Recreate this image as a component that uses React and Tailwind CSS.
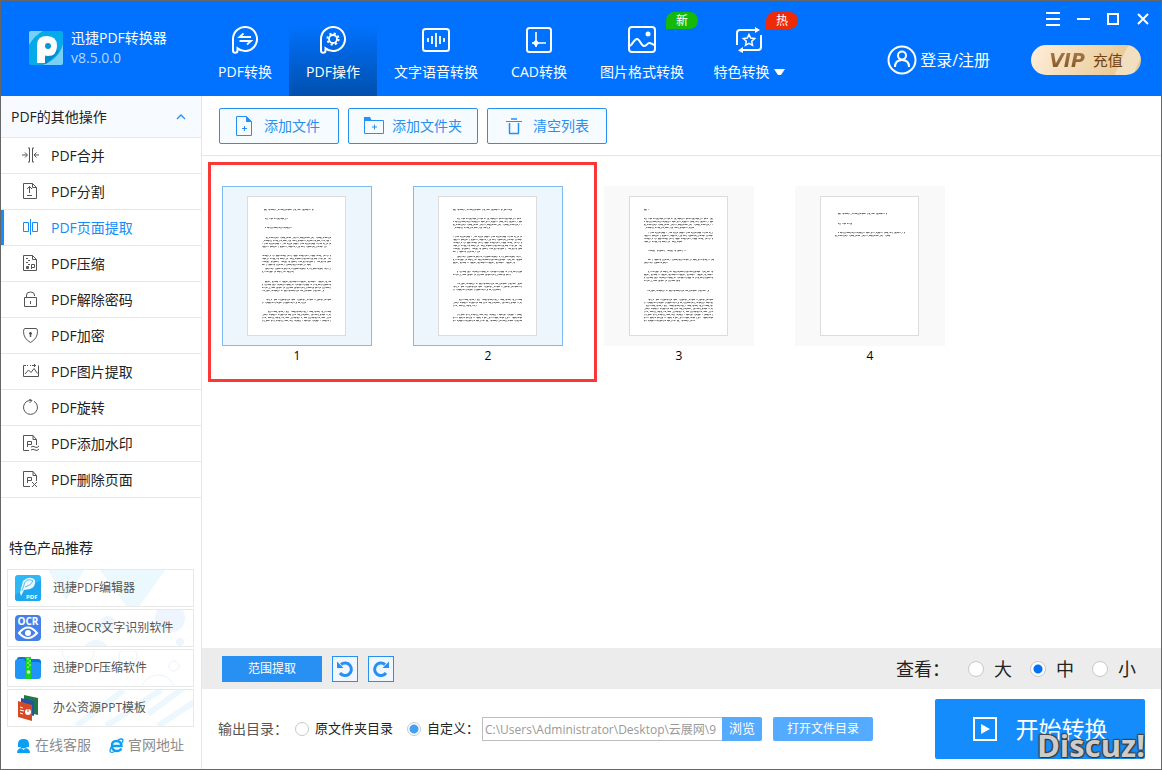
import React, { useState } from 'react';

const Svg = ({ size = 28, box = 28, className = '', children }) => (
  <svg
    width={size}
    height={size}
    viewBox={`0 0 ${box} ${box}`}
    fill="none"
    stroke="currentColor"
    strokeWidth="2"
    aria-hidden="true"
    className={`shrink-0 ${className}`}
  >
    {children}
  </svg>
);

const bubble = 'M2 24.500V13A12 12 0 1 1 6.500 22.400V24.500a2.250 2.250 0 0 1-4.500 0z';

const tabs = [
  {
    name: 'PDF转换',
    width: 'w-[88px]',
    icon: (
      <>
        <path d={bubble} />
        <path d="M20 11H8.500l4-3.500M8.500 15H20l-4 3.500" strokeWidth="1.800" />
      </>
    ),
  },
  {
    name: 'PDF操作',
    width: 'w-[88px]',
    icon: (
      <>
        <path d={bubble} />
        <circle cx="14" cy="13" r="4" strokeWidth="1.800" />
        <circle cx="14" cy="13" r="5.600" strokeWidth="2" strokeDasharray="2.200 2.198" />
      </>
    ),
  },
  {
    name: '文字语音转换',
    width: 'w-[118px]',
    icon: (
      <>
        <rect x="1" y="3" width="26" height="22" rx="2.500" />
        <path d="M6 12v4M10 10v8M14 7v14M18 10v8M22 12v4" strokeWidth="1.800" />
      </>
    ),
  },
  {
    name: 'CAD转换',
    width: 'w-[88px]',
    icon: (
      <>
        <rect x="2" y="2" width="24" height="24" rx="2.500" />
        <path d="M11 6v15M7 17h14" strokeWidth="1.600" />
        <path d="M11 13.500l3 3.500-3 3.500L7.500 17z" fill="currentColor" stroke="none" />
      </>
    ),
  },
  {
    name: '图片格式转换',
    width: 'w-[118px]',
    badge: '新',
    badgeClass: 'left-[38px] bg-[#14b90a]',
    icon: (
      <>
        <rect x="1" y="1" width="26" height="25" rx="3" />
        <path d="M2 20c3-2 4-7 7-7s4 7 7 7 3-3 5-3 3 1 5 2" />
        <circle cx="20" cy="8" r="2.500" fill="currentColor" stroke="none" />
      </>
    ),
  },
  {
    name: '特色转换',
    width: 'w-24',
    arrow: true,
    badge: '热',
    badgeClass: 'left-[31px] bg-[#ef2b07]',
    icon: (
      <>
        <path d="M2 19V7q0-3 3-3h16M26 9v12q0 3-3 3H7" />
        <path d="M20 1l5 3-5 3zM8 21l-5 3.500L8 27z" fill="currentColor" stroke="none" />
        <path d="M14 8.500l1.700 3.600 4 .5-3 2.700.8 4-3.500-2-3.500 2 .8-4-3-2.700 4-.5z" strokeWidth="1.500" />
      </>
    ),
  },
];

const operations = [
  { name: 'PDF合并', icon: <path d="M6 1h1.500v14H6M12 1h-1.500v14H12M0 8h5M3 5.500L5.500 8 3 10.500M17 8h-5M14.500 5.500L12 8l2.500 2.500" /> },
  { name: 'PDF分割', icon: <path d="M1.500.5h9l4 4v11h-13zM10.500.5v4h4M7.500 10V3.500M5 6l2.500-2.500L10 6M5 12.500h5" /> },
  { name: 'PDF页面提取', icon: <path d="M1.500 3.500h5v9h-5zM10.500 3.500h5v9h-5zM8.500 0v16" /> },
  {
    name: 'PDF压缩',
    icon: <path d="M1.500.5h9l4 4v11h-13zM10.500.5v4h4M4 3.500h2M6 5.500h2M4 7.500h2M6 9.500h2M4 12.500h3M4.500 11.500h2v2h-2zM9.500 14V9.500h3v3h-3" />,
  },
  { name: 'PDF解除密码', icon: <path d="M2.500 6.500h12v9h-12zM4.500 6.500V4q0-3 4-3t4 3v1M8.500 10v3" /> },
  { name: 'PDF加密', icon: <><path d="M3 1.500h11q1.500 0 1.500 3 0 7-7 11-7-4-7-11 0-3 1.500-3z" /><path d="M8.500 5v5M7 6.500h3" strokeWidth="1.500" /></> },
  { name: 'PDF图片提取', icon: <path d="M4 2.500H1.500v11h15v-11M5 2.500h1M8 2.500h1M10 2.500h4M12.500 1v3M3 11l3.500-4L9 9.500l3-4 3.500 5" /> },
  { name: 'PDF旋转', icon: <path d="M5 2.300A7 7 0 1 0 12 2.300M5 2.300q2-1 4.500-.8M7 0l3 1.500L7.500 4" /> },
  { name: 'PDF添加水印', icon: <path d="M7 15.500H1.500V.5H11l3.500 4V10M11 .5v4h3.500M5.500 12V6.500h4V9.500h-4M9 12q2-1.500 4 0t4-1M9 15q2-1.500 4 0t4-1" /> },
  { name: 'PDF删除页面', icon: <path d="M8 15.500H1.500V.5H11l3.500 4V10M11 .5v4h3.500M5.500 12V6.500h4V9.500h-4M10 11l5 5M15 11l-5 5" /> },
];

const products = [
  {
    name: '迅捷PDF编辑器',
    art: <path d="M40 0h36L58 30zM92 0h65l-32 45z" fill="#ebf8fe" />,
    icon: (
      <>
        <rect width="26" height="26" rx="3" fill="#2cb9f5" />
        <path d="M0 20L26 5v18q0 3-3 3H3q-3 0-3-3z" fill="#20a5f0" />
        <path d="M5 18L8 6q7-6 12-1 1 7-5 9l-6 1-3 6z" fill="#e8f9ff" />
        <path d="M7 16L10 7q4-4 8-1-1 4-8 6" stroke="#62bfe8" fill="none" />
        <text x="11" y="24" fontSize="6" fontWeight="bold" fill="white" fontFamily="Open Sans">PDF</text>
      </>
    ),
  },
  {
    name: '迅捷OCR文字识别软件',
    art: <g fill="#eef5fe"><circle cx="162" cy="8" r="15" /><circle cx="100" cy="14" r="8" /><circle cx="88" cy="44" r="14" /><circle cx="172" cy="32" r="4" /></g>,
    icon: (
      <>
        <rect width="26" height="26" rx="4" fill="#4480ea" />
        <text x="13" y="10" textAnchor="middle" fontSize="10" fontWeight="bold" fill="white" fontFamily="Open Sans">OCR</text>
        <path d="M4 18q9-11 18 0-9 10-18 0z" stroke="white" strokeWidth="2" fill="none" />
        <circle cx="13" cy="18" r="3" fill="white" />
      </>
    ),
  },
  {
    name: '迅捷PDF压缩软件',
    art: <g stroke="#e9f4fd" fill="none"><circle cx="70" cy="0" r="16" /><circle cx="120" cy="6" r="9" /><circle cx="166" cy="16" r="5" /><circle cx="150" cy="42" r="17" /></g>,
    icon: (
      <>
        <path d="M2 4q0-2 3-2h5l3 2h10q3 0 3 3v4H2z" fill="#0973d8" />
        <path d="M0 7q0-3 3-3h6l2 3h12q3 0 3 3v11q0 3-3 3H3q-3 0-3-3z" fill="#1e95f7" />
        <path d="M11 2h5v22h-5z" fill="#18d51e" />
        <path d="M12 4h2M14 6h2M12 8h2M14 10h2M12 12h2" stroke="#b9ffb0" />
        <circle cx="13.500" cy="17" r="1.800" fill="#e0ffe0" />
      </>
    ),
  },
  {
    name: '办公资源PPT模板',
    art: <g stroke="#ecf8fe" strokeWidth="6"><path d="M68 36L116 0M98 36l55-36M140 24l46-34M150 36l36-24" /></g>,
    icon: (
      <>
        <path d="M9 0l14 3v17l-4-1V7L9 5z" fill="#20774a" />
        <path d="M6 3l13 3v15l-4-1V10L6 8z" fill="#2853a5" />
        <path d="M3 6l14 4v16L3 22z" fill="#d64a26" />
        <path d="M5 12l3 1M5 15l4 1M5 18l3 1" stroke="white" />
        <circle cx="13" cy="17" r="3" fill="white" />
        <path d="M13 17v-3" stroke="#d64a26" />
      </>
    ),
  },
];

// text rows of each page: [y, from, to]
const pages = [
  [[13, 17, 67], [22, 18, 41], [31, 18, 45], [41, 19, 84], [44, 15, 84], [47, 15, 84], [50, 15, 80], [59, 15, 84], [62, 15, 84], [65, 15, 84], [68, 15, 64], [72, 18, 84], [75, 15, 47], [85, 18, 84], [88, 15, 84], [91, 15, 84], [94, 15, 77], [103, 19, 84], [106, 15, 59], [115, 19, 84], [118, 15, 84], [121, 15, 84], [124, 15, 84]],
  [[13, 15, 74], [22, 19, 84], [25, 15, 84], [28, 15, 84], [31, 15, 52], [40, 15, 84], [43, 15, 84], [46, 15, 84], [49, 15, 84], [52, 15, 84], [55, 15, 42], [60, 19, 84], [63, 15, 84], [66, 15, 77], [75, 19, 84], [78, 15, 73], [87, 19, 84], [90, 15, 84], [93, 15, 63], [103, 19, 84], [106, 15, 84], [109, 15, 39], [118, 19, 84], [121, 15, 84], [124, 15, 84]],
  [[13, 15, 20], [22, 15, 84], [25, 15, 84], [28, 15, 84], [31, 15, 65], [36, 19, 84], [39, 15, 84], [42, 15, 84], [45, 15, 53], [54, 19, 57], [63, 19, 85], [66, 15, 39], [75, 19, 84], [78, 15, 84], [81, 15, 84], [84, 15, 51], [94, 18, 80], [103, 19, 84], [106, 15, 84], [109, 15, 84], [112, 15, 84], [115, 15, 84], [118, 15, 84], [121, 15, 84], [124, 15, 66]],
  [[17, 18, 67], [27, 18, 32], [36, 18, 85], [39, 15, 70]],
];

const dashes = ['3 1 5 1 2 2 4 1', '6 1 2 1 1 2 3 1 4 2', '2 1 4 1 7 1 1 1', '5 1 1 1 3 2 6 1 2 1'];
const darkDashes = ['2 3 1 1 3 4 1 2', '1 2 3 5 2 1 1 3', '3 2 1 4 1 1 2 5', '1 1 2 3 1 5 3 2'];

const PagePreview = ({ rows }) => (
  <svg width="99" height="140" viewBox="0 0 99 140" fill="none" aria-hidden="true">
    <rect x="0.500" y="0.500" width="98" height="139" fill="white" stroke="#dcdcdc" />
    {rows.map(([y, from, to], i) => (
      <g key={y}>
        <path d={`M${from} ${y + 0.5}H${to}`} stroke="#b8b8b8" strokeDasharray={dashes[i % 4]} strokeDashoffset={i * 3} />
        <path d={`M${from} ${y + 0.5}H${to}`} stroke="#777" strokeDasharray={darkDashes[i % 4]} strokeDashoffset={i * 5} />
        <path d={`M${from} ${y + 1.5}H${to}`} stroke="#d0d0d0" strokeDasharray={darkDashes[(i + 2) % 4]} strokeDashoffset={i} />
      </g>
    ))}
  </svg>
);

const Header = ({ active, onSelect }) => (
  <header className="flex h-[95px] shrink-0 bg-[#0072ff] text-white">
    <div className="flex w-[200px] shrink-0 gap-2 pl-7 pt-[27px]">
      <svg width="34" height="34" viewBox="0 0 34 34" className="mt-[3px] shrink-0" aria-hidden="true">
        <rect width="34" height="34" rx="2" fill="#06a9e9" />
        <path d="M0 14V2q0-2 2-2h12Q6 4 0 14zM14 34h18q2 0 2-2V13q-4 15-20 21z" fill="#79d0f5" />
        <path d="M11 31L27 17q4 2 1 6L17 33z" fill="#008ccc" />
        <path d="M8 32V14q0-9 10-9t10 10-9 10l-3-.5V32z" fill="white" />
        <circle cx="19" cy="15" r="3" fill="#0798d4" />
      </svg>
      <div className="text-sm">
        <h1>迅捷PDF转换器</h1>
        <p className="text-[#b6d7ff]">v8.5.0.0</p>
      </div>
    </div>
    <nav className="flex">
      {tabs.map((tab) => (
        <button
          key={tab.name}
          type="button"
          onClick={() => onSelect(tab.name)}
          className={`flex flex-col items-center gap-2 pt-[25px] text-sm whitespace-nowrap ${tab.width} ${
            active === tab.name ? 'bg-linear-to-b from-[#0072ff] from-25% to-[#0050ae]' : ''
          }`}
        >
          <span className="relative">
            <Svg>{tab.icon}</Svg>
            {tab.badge && (
              <span className={`absolute -top-[14px] h-[17px] w-8 rounded-t-full rounded-br-full text-center text-xs leading-[17px] ${tab.badgeClass}`}>
                {tab.badge}
              </span>
            )}
          </span>
          <span className="flex items-center gap-1">
            {tab.name}
            {tab.arrow && (
              <svg width="11" height="7" viewBox="0 0 11 7" fill="currentColor" aria-hidden="true">
                <path d="M0 0h11L7 6H4z" />
              </svg>
            )}
          </span>
        </button>
      ))}
    </nav>
    <div className="ml-auto flex flex-col gap-4 pt-2">
      <div className="flex h-5 justify-end pr-[3px]">
        {[
          ['菜单', 'M2 3h14M2 9h14M2 15h14'],
          ['最小化', 'M3 9h13'],
          ['最大化', 'M4 4h10v10H4z'],
          ['关闭', 'M4 4l10 10M14 4L4 14'],
        ].map(([name, d]) => (
          <button key={name} type="button" aria-label={name} className="flex w-[30px] items-center justify-center">
            <Svg size={18} box={18}><path d={d} /></Svg>
          </button>
        ))}
      </div>
      <div className="flex h-[30px] items-center gap-[41px] pr-5">
        <button type="button" className="flex items-center gap-[3px] text-base whitespace-nowrap">
          <Svg size={30} box={30}>
            <circle cx="15" cy="15" r="13.500" />
            <circle cx="15" cy="10.500" r="4" />
            <path d="M8 22q0-7 7-7t7 7" />
          </Svg>
          登录/注册
        </button>
        <button
          type="button"
          className="flex h-[30px] w-[110px] items-center justify-center gap-1 rounded-full bg-[linear-gradient(115deg,#ffeed9_0%,#eacb99_78%,#f2dfc0_79%,#f2dfc0_93%,#e8c993_94%)] text-[15px] text-[#704214]"
        >
          <span className="bg-linear-to-b from-[#b58352] to-[#74511d] bg-clip-text pr-1 font-['DejaVu_Sans'] text-[19px] font-bold text-transparent italic">VIP</span>
          充值
        </button>
      </div>
    </div>
  </header>
);

const Sidebar = ({ current, onSelect }) => (
  <aside className="flex w-[201px] shrink-0 flex-col border-r border-[#e6e6e6]">
    <button type="button" className="flex h-[42px] items-center justify-between border-b border-[#e8e8e8] bg-[#f7faff] pr-[15px] pl-[10px] text-sm">
      PDF的其他操作
      <Svg size={10} box={10} className="text-[#2890f2]">
        <path d="M1 7l4-4 4 4" strokeWidth="1.300" />
      </Svg>
    </button>
    <ul>
      {operations.map((item) => (
        <li key={item.name} className="border-b border-[#e8e8e8]">
          <button
            type="button"
            onClick={() => onSelect(item.name)}
            className={`flex h-[35px] w-full items-center gap-3 border-l-3 pl-[18px] text-sm ${
              current === item.name ? 'border-[#148cfb] text-[#148cfb]' : 'border-transparent'
            }`}
          >
            <Svg size={17} box={17} className={current === item.name ? '' : 'text-[#555]'}>
              <g strokeWidth="1">{item.icon}</g>
            </Svg>
            {item.name}
          </button>
        </li>
      ))}
    </ul>
    <h2 className="mt-10 px-2 text-sm">特色产品推荐</h2>
    <ul className="mt-[11px] flex flex-col gap-[2px] pr-[7px] pl-[6px]">
      {products.map((product) => (
        <li key={product.name}>
          <a href="#" className="relative flex h-[38px] items-center gap-3 border border-[#e8e8e8] pl-[7px] text-xs text-[#555]">
            <svg className="absolute inset-0" width="100%" height="100%" viewBox="0 0 185 36" aria-hidden="true">{product.art}</svg>
            <svg className="relative" width="26" height="26" viewBox="0 0 26 26" aria-hidden="true">{product.icon}</svg>
            <span className="relative">{product.name}</span>
          </a>
        </li>
      ))}
    </ul>
    <div className="mt-2 flex gap-[18px] px-[15px] text-sm text-[#8c8c8c]">
      <a href="#" className="flex items-center gap-1">
        <svg width="15" height="15" viewBox="0 0 15 15" fill="#0a9ff5" aria-hidden="true">
          <path d="M2 6q0-5 5.500-5T13 6v3h-2V5H4v4H2z" />
          <circle cx="7.500" cy="6.500" r="4" />
          <path d="M1 15q0-4 4-5l2.500 2 2.500-2q4 1 4 5z" />
        </svg>
        在线客服
      </a>
      <a href="#" className="flex items-center gap-1">
        <svg width="15" height="15" viewBox="0 0 15 15" fill="none" stroke="#0a9ff5" aria-hidden="true">
          <path d="M4 8h8.500q0-5-5-5T3 8q0 5 5 5 3 0 4.300-2.500" strokeWidth="2.400" />
          <path d="M9 2q4-2 5 0 0 1-1 3M3 8q-3 4-1.500 6 2 1 5-1" strokeWidth="1.300" />
        </svg>
        官网地址
      </a>
    </div>
  </aside>
);

const Toolbar = () => (
  <div className="flex h-[60px] items-center gap-[9px] border-b border-[#e6e6e6] px-[17px] text-sm text-[#2890f2]">
    <button type="button" className="flex h-9 w-[120px] items-center justify-center gap-[10px] rounded-xs border border-[#2890f2] bg-[#f6fbff] pr-1">
      <Svg size={20} box={20}>
        <path d="M2.500.5h10l5 5v14h-15zM10.500 10v5M8 12.500h5" strokeWidth="1" />
        <path d="M12 0v6h6z" fill="currentColor" stroke="none" />
      </Svg>
      添加文件
    </button>
    <button type="button" className="flex h-9 w-[130px] items-center justify-center gap-2 rounded-xs border border-[#2890f2] bg-[#f6fbff]">
      <Svg size={20} box={20}>
        <path d="M.5 17V4.500h19V17.500H.5zM10.500 8.500v5M8 11h5" strokeWidth="1" />
        <path d="M0 1h6l2 4H0z" fill="currentColor" stroke="none" />
      </Svg>
      添加文件夹
    </button>
    <button type="button" className="flex h-9 w-[120px] items-center justify-center gap-[10px] rounded-xs border border-[#2890f2] bg-[#f6fbff]">
      <Svg size={18} box={18}>
        <path d="M1 4.500h16" strokeWidth="1" />
        <path d="M6 2h6M4.500 6v10M13.500 6v10M4 16.500h10" strokeWidth="1.500" />
      </Svg>
      清空列表
    </button>
  </div>
);

const PageGrid = () => {
  const [selected, setSelected] = useState([0, 1]);

  const toggle = (index) => {
    setSelected(selected.includes(index) ? selected.filter((i) => i !== index) : [...selected, index]);
  };

  return (
    <div className="relative flex flex-1 flex-wrap content-start gap-x-[41px] px-5 pt-[30px]">
      {pages.map((rows, index) => (
        <button key={index} type="button" onClick={() => toggle(index)} className="w-[150px] text-center text-xs text-black">
          <span
            className={`flex h-40 items-center justify-center border pr-px ${
              selected.includes(index) ? 'border-[#7fbcf5] bg-[#edf5fd]' : 'border-[#f9f9f9] bg-[#f9f9f9]'
            }`}
          >
            <PagePreview rows={rows} />
          </span>
          <span className="block leading-5">{index + 1}</span>
        </button>
      ))}
      <div className="pointer-events-none absolute top-[6px] left-[6px] h-[220px] w-[389px] border-3 border-[#fb3838]" />
    </div>
  );
};

const radioDot = 'shrink-0 appearance-none rounded-full border border-[#c8c8c8] bg-white';

const App = () => {
  const [tab, setTab] = useState('PDF操作');
  const [operation, setOperation] = useState('PDF页面提取');
  const [size, setSize] = useState('中');
  const [target, setTarget] = useState('custom');

  return (
    <div className="relative flex min-h-screen flex-col border border-[#666] bg-white font-['Open_Sans','Noto_Sans_CJK_SC',sans-serif] text-[#222]">
      <Header active={tab} onSelect={setTab} />
      <div className="flex flex-1">
        <Sidebar current={operation} onSelect={setOperation} />
        <main className="flex min-w-0 flex-1 flex-col">
          <Toolbar />
          <PageGrid />

          <div className="flex h-[41px] items-center justify-between bg-[#ececec] px-5">
            <div className="flex gap-[10px]">
              <button type="button" className="h-[26px] w-[100px] bg-[#2890f2] text-xs text-white">范围提取</button>
              <button type="button" aria-label="向左旋转" className="flex size-[26px] items-center justify-center border border-[#2890f2] bg-[#f0f7ff] text-[#2890f2]">
                <Svg size={18} box={18}>
                  <path d="M5 4.500A6.300 6.300 0 1 1 4 13" strokeWidth="3" />
                  <path d="M1 1.500v6.500h6.500z" fill="currentColor" stroke="none" />
                </Svg>
              </button>
              <button type="button" aria-label="向右旋转" className="flex size-[26px] items-center justify-center border border-[#2890f2] bg-[#f0f7ff] text-[#2890f2]">
                <Svg size={18} box={18}>
                  <path d="M13 4.500A6.300 6.300 0 1 0 14 13" strokeWidth="3" />
                  <path d="M17 1.500v6.500h-6.500z" fill="currentColor" stroke="none" />
                </Svg>
              </button>
            </div>
            <fieldset className="flex items-center gap-[18px] pr-[5px] text-lg">
              <span>查看：</span>
              {['大', '中', '小'].map((name) => (
                <label key={name} className="flex items-center gap-[10px]">
                  <input
                    type="radio"
                    name="size"
                    checked={size === name}
                    onChange={() => setSize(name)}
                    className={`size-4 checked:bg-[radial-gradient(circle,#0072f5_4px,white_5px)] ${radioDot}`}
                  />
                  {name}
                </label>
              ))}
            </fieldset>
          </div>

          <div className="flex h-20 items-center justify-between px-4">
            <div className="flex items-center text-[13px]">
              <span className="w-[77px] text-sm whitespace-nowrap text-[#555]">输出目录：</span>
              <label className="flex w-28 items-center gap-[6px]">
                <input
                  type="radio"
                  name="target"
                  checked={target === 'source'}
                  onChange={() => setTarget('source')}
                  className={`size-[14px] checked:bg-[radial-gradient(circle,#41a1f2_4px,white_5px)] ${radioDot}`}
                />
                原文件夹目录
              </label>
              <label className="flex w-[75px] items-center gap-[6px] whitespace-nowrap">
                <input
                  type="radio"
                  name="target"
                  checked={target === 'custom'}
                  onChange={() => setTarget('custom')}
                  className={`size-[14px] checked:bg-[radial-gradient(circle,#41a1f2_4px,white_5px)] ${radioDot}`}
                />
                自定义：
              </label>
              <input
                type="text"
                aria-label="输出目录"
                defaultValue={'C:\\Users\\Administrator\\Desktop\\云展网\\9'}
                className="h-6 w-60 border border-r-0 border-[#bdbdbd] px-[2px] text-xs text-[#999]"
              />
              <button type="button" className="h-6 w-10 rounded-r-xs bg-[#54abff] text-[13px] text-white">浏览</button>
              <button type="button" className="ml-[11px] h-6 w-[100px] rounded-xs bg-[#54abff] text-xs text-white">打开文件目录</button>
            </div>
            <button type="button" className="flex h-[60px] w-[210px] items-center justify-center gap-[19px] rounded-xs bg-[#148cfb] text-[23px] text-white">
              <Svg size={24} box={24}>
                <rect x="1" y="1" width="22" height="22" />
                <path d="M8 7l9 5-9 5z" fill="currentColor" stroke="none" />
              </Svg>
              开始转换
            </button>
          </div>
        </main>
      </div>
      <span className="pointer-events-none absolute right-4 bottom-[2px] text-[31px] leading-[44px] font-bold text-[#ccc] [text-shadow:1px_1px_1px_#333,-1px_-1px_1px_#444,1px_-1px_1px_#444,-1px_1px_1px_#444]">
        Discuz!
      </span>
    </div>
  );
};

export default App;
